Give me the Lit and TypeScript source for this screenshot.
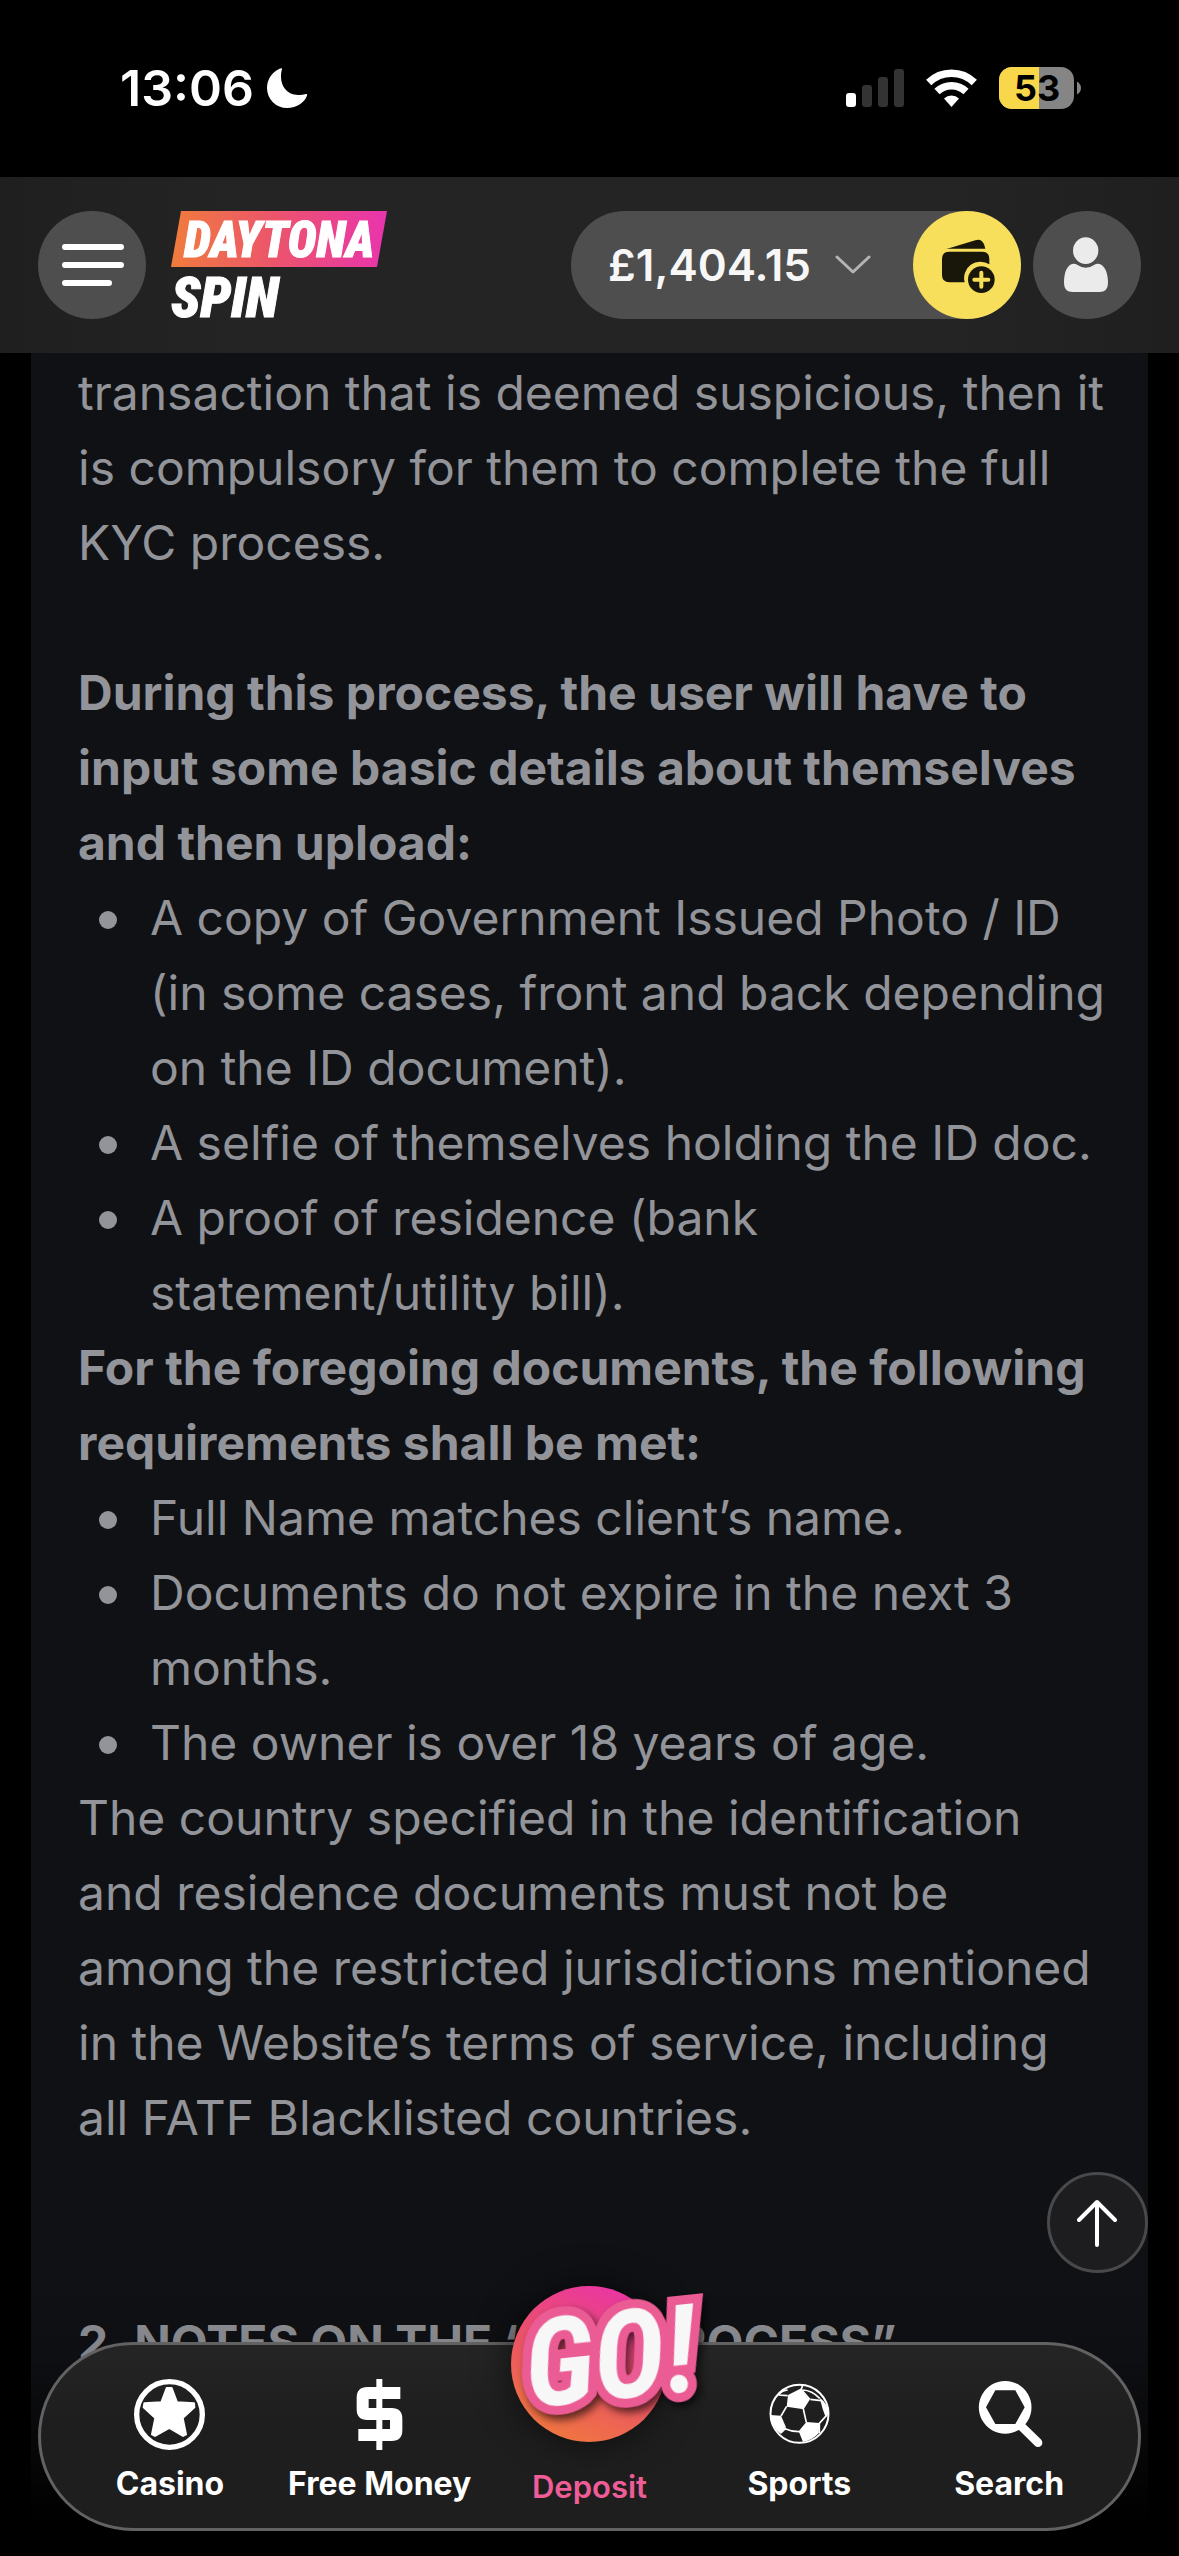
import { LitElement, html, css, svg } from "lit";
import { customElement } from "lit/decorators.js";

const navIcons = {
  casino: svg`<svg class="icon" viewBox="405 417 213 213" aria-hidden="true">
    <circle cx="511.5" cy="523.5" r="98.5" fill="none" stroke="#fff" stroke-width="16" />
    <path d="M503 444H518L534 487L585 490L586 502L551 534L561 583L552 588L511 564L468 588L459 583L469 534L434 502L436 490L487 487Z"
      fill="#fff" stroke="#fff" stroke-width="6" stroke-linejoin="round" />
  </svg>`,
  money: svg`<svg class="icon" viewBox="1034 417 213 213" fill="#fff" aria-hidden="true">
    <path d="M1203 441H1104Q1072 441 1072 473V508Q1072 540 1104 540H1172V567H1077V603H1177Q1209 603 1209 571V536Q1209 504 1177 504H1108V477H1203Z" />
    <path d="M1131 417H1149V630H1131Z" />
  </svg>`,
  sports: svg`<svg class="icon" viewBox="41 42 213 213" fill="none" stroke="#fff" aria-hidden="true">
    <circle cx="147.500" cy="146.500" r="87" stroke-width="6" />
    <path stroke="none" fill="#fff" d="M153 70L180 101L160 133L109 125L113 90ZM60 150L92 152L107 187L89 205Q62 184 60 150ZM168 171L207 174L205 205Q186 226 158 231L145 199ZM208 98Q232 114 235 148L226 157L217 132Z" />
    <path stroke-width="5" d="M153 73L157 60M112 92L84 90M180 103L212 107M109 124L92 153M159 132L168 172M104 191Q124 200 146 200M207 175L228 152M207 175V205M90 205L106 190M84 90Q96 76 112 75M157 75Q185 76 208 100" />
  </svg>`,
  search: svg`<svg class="icon" viewBox="818 717 213 213" aria-hidden="true">
    <path fill="#fff" fill-rule="evenodd" d="M912 723A79 79 0 1 1 911 723ZM882 751L854 802L882 852H942L970 802L942 751Z" />
    <path d="M956 855L1010 908" fill="none" stroke="#fff" stroke-width="26" stroke-linecap="round" />
  </svg>`,
};

@customElement("status-bar")
class StatusBar extends LitElement {
  static styles = css`
    :host { display: flex; justify-content: space-between; align-items: center; box-sizing: border-box; height: 177px; padding: 0 98px 2px 120px; background: #000; color: #fff; }
    .group { display: flex; align-items: center; }
    .time { font-size: 50px; line-height: 60px; font-weight: 600; }
    .moon { width: 40px; height: 40px; margin-left: 13px; }
    .signals { gap: 22px; }
    .bars { width: 58px; height: 38px; }
    .wifi { width: 51px; height: 38px; }
    .battery { width: 82px; height: 42px; }
    .level { font: 700 36px Inter, sans-serif; }
  `;
  render() {
    return html`
      <div class="group">
        <span class="time">13:06</span>
        <svg class="moon" viewBox="0 0 40 40" aria-hidden="true"><path fill="#fff" d="M15 1C15.500 0 14 0 12.500 .8A21 21 0 0 0 0 20A20 20 0 0 0 20 40C30 40 38 34 40 27.500C40.400 26 39.500 25.500 38 26.300C35 27.300 32 27.200 29 26.800C20 26 14 18 14 9C14 6 14.300 3 15 1Z" /></svg>
      </div>
      <div class="group signals">
        <svg class="bars" viewBox="0 0 58 38" aria-hidden="true">
          <rect y="24" width="10" height="14" rx="3" fill="#fff" />
          <g fill="#333"><rect x="16" y="16" width="10" height="22" rx="3" /><rect x="32" y="8" width="10" height="30" rx="3" /><rect x="48" width="10" height="38" rx="3" /></g>
        </svg>
        <svg class="wifi" viewBox="0 0 51 38" aria-hidden="true">
          <g fill="none" stroke="#fff" stroke-width="7.500">
            <path d="M2.700 13.500A32.500 32.500 0 0 1 48.300 13.500" /><path d="M11 22.500A21 21 0 0 1 40 22.500" />
          </g>
          <path fill="#fff" d="M25.500 38L18 29.500A11 11 0 0 1 33 29.500Z" />
        </svg>
        <svg class="battery" viewBox="0 0 82 42" role="img" aria-label="Battery 53 percent">
          <rect width="75" height="42" rx="13" fill="#858585" />
          <path d="M40 0H13A13 13 0 0 0 0 13V29A13 13 0 0 0 13 42H40Z" fill="#f8d74a" />
          <path d="M78 14.500Q82 17 82 21T78 27.500Z" fill="#858585" />
          <text class="level" x="38" y="34" text-anchor="middle">53</text>
        </svg>
      </div>`;
  }
}

@customElement("site-header")
class SiteHeader extends LitElement {
  static styles = css`
    :host { display: flex; align-items: center; gap: 25px; box-sizing: border-box; height: 176px; padding: 0 38px; background: linear-gradient(90deg, #1f1f1f, #242424 20%, #242424 80%, #1f1f1f); position: relative; }
    button { font: inherit; border: 0; padding: 0; margin: 0; color: inherit; background: none; }
    .round { display: block; flex: none; width: 108px; height: 108px; border-radius: 50%; background: #4e4e4e; }
    .round svg { display: block; width: 108px; height: 108px; }
    .deposit { background: #f7df5c; }
    .logo { display: block; width: 216px; height: 108px; }
    .logo svg { display: block; width: 216px; height: 108px; overflow: visible; }
    .brand { font: italic 900 49px "Roboto Condensed", sans-serif; fill: #fff; stroke: #fff; stroke-width: 1px; }
    .brand-large { font-size: 55px; }
    .wallet { display: flex; justify-content: space-between; align-items: center; margin-left: auto; border-radius: 54px; background: #4e4e4e; }
    .balance { display: flex; align-items: center; gap: 24px; padding: 0 42px 0 37px; color: #f7f7f7; font-size: 44px; line-height: 54px; font-weight: 600; }
    .chevron { width: 36px; height: 20px; }
    .account { margin-left: -13px; }
  `;
  render() {
    return html`
      <button class="round" aria-label="Menu">
        <svg viewBox="0 0 108 108"><path d="M27 36H83M27 54H83M27 72H71" stroke="#fff" stroke-width="6" stroke-linecap="round" /></svg>
      </button>
      <a class="logo" href="#" aria-label="Daytona Spin">
        <svg viewBox="0 0 216 108">
          <defs><linearGradient id="brand"><stop stop-color="#f07c3c" /><stop offset=".5" stop-color="#ec536e" /><stop offset="1" stop-color="#e934ad" /></linearGradient></defs>
          <path d="M10 0H216L206 56H0Z" fill="url(#brand)" />
          <text class="brand" x="13" y="46">DAYTONA</text>
          <text class="brand brand-large" x="0" y="106">SPIN</text>
        </svg>
      </a>
      <div class="wallet">
        <button class="balance">£1,404.15
          <svg class="chevron" viewBox="0 0 36 20" aria-hidden="true"><path d="M2 2L18 17L34 2" fill="none" stroke="#b4b4b4" stroke-width="3" stroke-linecap="round" stroke-linejoin="round" /></svg>
        </button>
        <button class="round deposit" aria-label="Add funds">
          <svg viewBox="39 33 324 324" fill="#19170a">
            <path d="M132 149L226 121Q238 117 246 124Q254 131 256 146H150Q140 146 132 149Z" />
            <path d="M148 155H246Q268 155 268 177V193A49 49 0 0 0 194 247H148Q126 247 126 225V177Q126 155 148 155Z" />
            <circle cx="244" cy="239" r="40" />
            <path d="M244 218V260M223 239H265" stroke="#f7df5c" stroke-width="12" stroke-linecap="round" />
          </svg>
        </button>
      </div>
      <button class="round account" aria-label="Account">
        <svg viewBox="399 33 324 324" fill="#ebebeb">
          <ellipse cx="557" cy="152" rx="38" ry="40" />
          <path d="M516 192Q525 190 533 195Q557 212 582 195Q590 190 599 192C617 198 624 224 624 249Q624 276 598 276H518Q492 276 492 249C492 224 498 198 516 192Z" />
        </svg>
      </button>`;
  }
}

@customElement("policy-article")
class PolicyArticle extends LitElement {
  static styles = css`
    :host { display: block; margin: 0 31px; padding: 2px 40px 0 47px; background: #101115; color: #929499; font-size: 48px; line-height: 75px; }
    p, h2, h3, ul { margin: 0; padding: 0; font-size: 48px; line-height: 75px; }
    h2, h3 { font-weight: 700; }
    .spaced { margin-bottom: 75px; }
    .section { margin-bottom: 150px; }
    ul { padding-left: 21px; list-style: none; }
    li { display: grid; grid-template-columns: 18px 1fr; column-gap: 33px; }
    li::before { content: ""; width: 18px; height: 18px; margin-top: 31px; border-radius: 50%; background: #929499; }
    .keep { white-space: nowrap; }
  `;
  render() {
    return html`
      <p class="spaced">transaction that is deemed suspicious, then it is compulsory for them to complete the full KYC process.</p>
      <h3>During this process, the user will have to input some basic details about themselves and then upload:</h3>
      <ul>
        <li><span>A copy of Government Issued Photo / ID (in some cases, front and back depending on the ID document).</span></li>
        <li><span>A selfie of themselves holding the ID doc.</span></li>
        <li><span>A proof of residence (bank <span class="keep">statement/utility</span> bill).</span></li>
      </ul>
      <h3>For the foregoing documents, the following requirements shall be met:</h3>
      <ul>
        <li><span>Full Name matches client’s name.</span></li>
        <li><span>Documents do not expire in the next 3 months.</span></li>
        <li><span>The owner is over 18 years of age.</span></li>
      </ul>
      <p class="section">The country specified in the identification and residence documents must not be among the restricted jurisdictions mentioned in the Website’s terms of service, including all FATF Blacklisted countries.</p>
      <h2>2. NOTES ON THE “KYC PROCESS”</h2>`;
  }
}

@customElement("bottom-nav")
class BottomNav extends LitElement {
  static styles = css`
    :host { display: block; }
    .bar { display: grid; grid-template-columns: repeat(5, 1fr); box-sizing: border-box; height: 189px; padding: 0 24px; border: 3px solid #626262; border-radius: 95px; background: linear-gradient(#252525, #1e1e1e 40%); }
    a { position: relative; display: flex; flex-direction: column; align-items: center; gap: 15px; padding-top: 34px; color: #fff; text-decoration: none; white-space: nowrap; font-size: 32px; line-height: 38px; font-weight: 700; }
    .icon { display: block; width: 71px; height: 71px; }
    .primary { justify-content: flex-end; padding: 0 0 22px; color: #ee5d97; font-size: 31px; font-weight: 600; }
    .badge { position: absolute; left: calc(50% - 90px); top: -75px; width: 220px; height: 190px; overflow: visible; }
    .glow { filter: drop-shadow(0 0 18px rgba(0, 0, 0, 0.6)); }
    .go { font: italic 700 122px "Roboto Condensed", sans-serif; fill: #f7f7f7; stroke: #eb5c94; stroke-width: 18px; stroke-linejoin: miter; paint-order: stroke; filter: drop-shadow(3px 5px 4px rgba(0, 0, 0, 0.65)); }
  `;
  render() {
    return html`
      <nav class="bar">
        <a href="#casino">${navIcons.casino}<span>Casino</span></a>
        <a href="#money">${navIcons.money}<span>Free Money</span></a>
        <a href="#deposit" class="primary">
          <svg class="badge" viewBox="0 0 220 190">
            <defs><linearGradient id="disc" x1=".25" y1="1" x2=".7" y2="0"><stop stop-color="#f0783c" /><stop offset=".5" stop-color="#ec5268" /><stop offset="1" stop-color="#e935a4" /></linearGradient></defs>
            <circle class="glow" cx="90" cy="94" r="78" fill="url(#disc)" />
            <text class="go" x="30" y="138" transform="rotate(-6 30 138)">GO!</text>
          </svg>
          <span>Deposit</span>
        </a>
        <a href="#sports">${navIcons.sports}<span>Sports</span></a>
        <a href="#search">${navIcons.search}<span>Search</span></a>
      </nav>`;
  }
}

@customElement("app-root")
class AppRoot extends LitElement {
  static styles = css`
    :host { display: flex; flex-direction: column; position: relative; height: 100vh; overflow: hidden; background: #000; font-family: Inter, "Liberation Sans", sans-serif; }
    main { display: flex; flex: 1; min-height: 0; overflow: hidden; }
    policy-article { flex: 1; }
    .dock { position: absolute; left: 0; right: 0; bottom: 0; padding: 69px 38px 25px; background: linear-gradient(rgba(0, 0, 0, 0), rgba(0, 0, 0, 0.12) 30%, #000 88%); }
    .top { position: absolute; right: 31px; bottom: 283px; display: grid; place-items: center; width: 101px; height: 101px; padding: 0; border: 3px solid #49494b; border-radius: 50%; background: #1d1d1f; }
    .top svg { width: 42px; height: 50px; }
  `;
  render() {
    return html`
      <status-bar></status-bar>
      <site-header></site-header>
      <main><policy-article></policy-article></main>
      <div class="dock"><bottom-nav></bottom-nav></div>
      <button class="top" aria-label="Back to top">
        <svg viewBox="0 0 42 50"><path d="M20 47V4M2 22L20 4L38 22" fill="none" stroke="#fff" stroke-width="4" stroke-linecap="round" stroke-linejoin="round" /></svg>
      </button>`;
  }
}
